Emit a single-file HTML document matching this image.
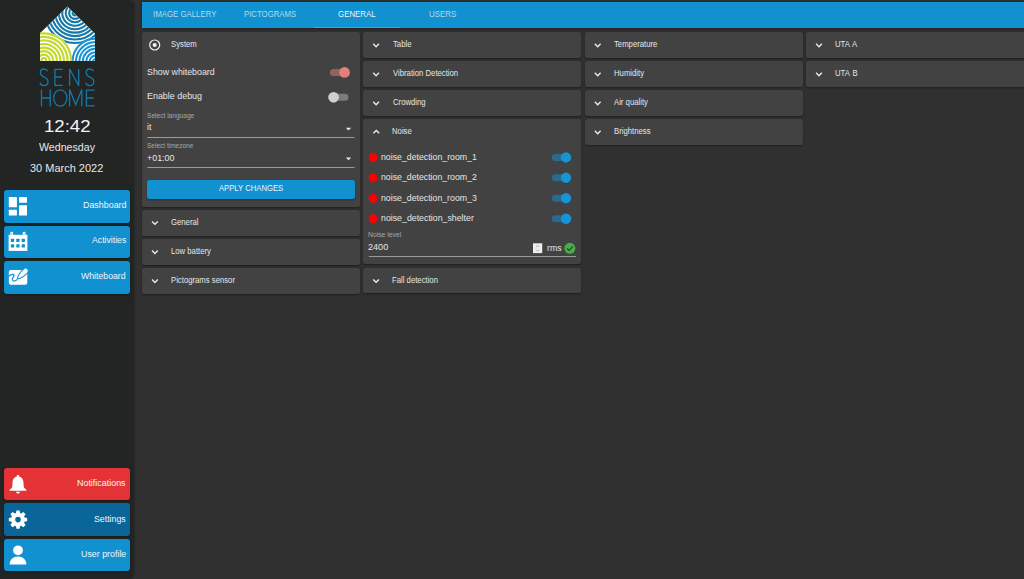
<!DOCTYPE html>
<html><head><meta charset="utf-8">
<style>
html,body{margin:0;padding:0}
body{width:1024px;height:579px;overflow:hidden;position:relative;background:#303030;font-family:"Liberation Sans",sans-serif}
.a{position:absolute}
.t{position:absolute;white-space:nowrap;line-height:1;transform-origin:0 0}
#side{left:0;top:0;width:133.8px;height:579px;background:#232524;border-radius:0 6px 6px 0;box-shadow:1px 0 1.5px rgba(0,0,0,0.18)}
.btn{position:absolute;left:4px;width:126.4px;height:32.5px;border-radius:3px;background:#1191d0;box-shadow:0 1px 2px rgba(0,0,0,0.35)}
#tabs{left:141.7px;top:2px;width:884px;height:26px;background:#1191d0;box-shadow:0 1px 3px rgba(0,0,0,0.35)}
.p{position:absolute;background:#424242;border-radius:2.5px;box-shadow:0 1px 2px rgba(0,0,0,0.35)}
</style></head>
<body>
<div id="side" class="a"></div>
<!-- sidebar buttons -->
<div class="btn" style="top:190px"></div>
<div class="btn" style="top:225.8px"></div>
<div class="btn" style="top:261.3px"></div>
<div class="btn" style="top:467.8px;background:#e43337"></div>
<div class="btn" style="top:503.2px;background:#0a6698"></div>
<div class="btn" style="top:538.7px"></div>

<svg class="a" style="left:0;top:0" width="134" height="579" viewBox="0 0 134 579">
  <defs>
    <clipPath id="house"><polygon points="40,33.2 67.4,6.4 95,33.5 95,61 40,61"/></clipPath>
  </defs>
  <g clip-path="url(#house)">
    <rect x="38" y="4" width="60" height="60" fill="#fff"/>
    <g fill="none" stroke="#1479a6" stroke-width="2.1">
      <circle cx="75" cy="13" r="2.4"/><circle cx="75" cy="13" r="5.85"/><circle cx="75" cy="13" r="9.3"/>
      <circle cx="75" cy="13" r="12.75"/><circle cx="75" cy="13" r="16.2"/><circle cx="75" cy="13" r="19.65"/>
      <circle cx="75" cy="13" r="23.1"/><circle cx="75" cy="13" r="26.55"/><circle cx="75" cy="13" r="30"/>
    </g>
    <circle cx="95.6" cy="61.6" r="24.1" fill="#fff"/>
    <g fill="none" stroke="#1793d3" stroke-width="2.05"><circle cx="95.6" cy="61.6" r="2.60"/><circle cx="95.6" cy="61.6" r="6.00"/><circle cx="95.6" cy="61.6" r="9.40"/><circle cx="95.6" cy="61.6" r="12.80"/><circle cx="95.6" cy="61.6" r="16.20"/><circle cx="95.6" cy="61.6" r="19.60"/><circle cx="95.6" cy="61.6" r="23.00"/></g>
    <circle cx="43.8" cy="60.6" r="28.4" fill="#fff"/>
    <g fill="none" stroke="#c3d82e" stroke-width="2.15"><circle cx="43.8" cy="60.6" r="2.40"/><circle cx="43.8" cy="60.6" r="5.95"/><circle cx="43.8" cy="60.6" r="9.50"/><circle cx="43.8" cy="60.6" r="13.05"/><circle cx="43.8" cy="60.6" r="16.60"/><circle cx="43.8" cy="60.6" r="20.15"/><circle cx="43.8" cy="60.6" r="23.70"/><circle cx="43.8" cy="60.6" r="27.25"/></g>
  </g>
  <g fill="none" stroke="#1479a6" stroke-width="1.3" stroke-linecap="butt">
    <path d="M47.8,71.2 C46.8,69.6 45.5,69 44,69 C41.8,69 40.4,70.5 40.4,72.8 C40.4,75.2 42.2,76.3 44.2,77.1 C46.4,78 48,79.2 48,81.8 C48,84.2 46.3,85.6 44,85.6 C42.1,85.6 40.6,84.5 39.9,82.8"/>
    <path d="M62.9,69.3 H54.9 V85.3 H62.9 M54.9,77 H62"/>
    <path d="M69.6,85.7 V69 L78.7,85.7 V69"/>
    <path transform="translate(45.8,0)" d="M47.8,71.2 C46.8,69.6 45.5,69 44,69 C41.8,69 40.4,70.5 40.4,72.8 C40.4,75.2 42.2,76.3 44.2,77.1 C46.4,78 48,79.2 48,81.8 C48,84.2 46.3,85.6 44,85.6 C42.1,85.6 40.6,84.5 39.9,82.8"/>
    <path d="M41.5,89.6 V106.5 M50.2,89.6 V106.5 M41.5,98 H50.2"/>
    <ellipse cx="60.3" cy="98" rx="6.6" ry="8.2"/>
    <path d="M69.6,106.5 V89.6 L75.7,104.5 L81.8,89.6 V106.5"/>
    <path d="M94.4,90.2 H86.4 V105.9 H94.4 M86.4,98 H93.6"/>
  </g>
  <!-- dashboard -->
  <g fill="#fff">
    <rect x="8.8" y="196.9" width="8.1" height="10.4" rx="0.6"/>
    <rect x="8.8" y="209.7" width="8.1" height="5.9" rx="0.6"/>
    <rect x="19" y="205.2" width="8" height="10.4" rx="0.6"/>
    <rect x="19" y="196.9" width="8" height="5.9" rx="0.6"/>
  </g>
  <!-- calendar -->
  <rect x="8.6" y="234.8" width="18.8" height="16.1" fill="#fff"/>
  <rect x="10.3" y="231.8" width="2.8" height="4" rx="1.2" fill="#fff"/>
  <rect x="22.7" y="231.8" width="2.8" height="4" rx="1.2" fill="#fff"/>
  <rect x="11.2" y="232.8" width="1" height="2" fill="#8fcbe9"/>
  <rect x="23.6" y="232.8" width="1" height="2" fill="#8fcbe9"/>
  <g fill="#1191d0">
    <rect x="10.85" y="238.65" width="3.3" height="3.3" rx="0.5"/><rect x="16.25" y="238.65" width="3.3" height="3.3" rx="0.5"/><rect x="21.65" y="238.65" width="3.3" height="3.3" rx="0.5"/>
    <rect x="10.85" y="244.15" width="3.3" height="3.3" rx="0.5"/><rect x="16.25" y="244.15" width="3.3" height="3.3" rx="0.5"/><rect x="21.65" y="244.15" width="3.3" height="3.3" rx="0.5"/>
  </g>
  <!-- whiteboard -->
  <rect x="8.85" y="270" width="18.45" height="14.8" rx="2" fill="#fff"/>
  <path d="M8.85,276.1 C10.5,274.8 12.3,274 13.6,274.6 C14.8,275.3 13.2,277 12.6,278.3 C12,279.8 12.8,281.2 14.4,281 C15.6,280.8 16.4,280.3 17,279.6" fill="none" stroke="#1191d0" stroke-width="1.25" stroke-linecap="round"/>
  <path d="M18,278.3 Q18.9,274.2 24.06,269.32 A2.2,2.2 0 0 1 27.14,272.48 Q22.12,277.5 18,278.3 Z" fill="none" stroke="#1191d0" stroke-width="2.1" stroke-linejoin="round"/>
  <path d="M18,278.3 Q18.9,274.2 24.06,269.32 A2.2,2.2 0 0 1 27.14,272.48 Q22.12,277.5 18,278.3 Z" fill="#fff"/>
  <!-- bell -->
  <g fill="#fff">
    <circle cx="18" cy="476.4" r="1.3"/>
    <path d="M18,476.6 C14.2,476.6 12.6,479.5 12.5,483 L12.3,486.3 C12.2,488 10.6,488.9 9.7,489.5 V490.8 H26.3 V489.5 C25.4,488.9 23.8,488 23.7,486.3 L23.5,483 C23.4,479.5 21.8,476.6 18,476.6 Z"/>
    <path d="M16.1,491.7 H19.9 C19.9,492.8 19.1,493.5 18,493.5 C16.9,493.5 16.1,492.8 16.1,491.7 Z"/>
  </g>
  <!-- gear -->
  <path fill="#fff" fill-rule="evenodd" d="M15.98,513.00 L16.39,510.44 L19.61,510.44 L20.02,513.00 L21.24,513.51 L23.33,511.98 L25.62,514.27 L24.09,516.36 L24.60,517.58 L27.16,517.99 L27.16,521.21 L24.60,521.62 L24.09,522.84 L25.62,524.93 L23.33,527.22 L21.24,525.69 L20.02,526.20 L19.61,528.76 L16.39,528.76 L15.98,526.20 L14.76,525.69 L12.67,527.22 L10.38,524.93 L11.91,522.84 L11.40,521.62 L8.84,521.21 L8.84,517.99 L11.40,517.58 L11.91,516.36 L10.38,514.27 L12.67,511.98 L14.76,513.51 Z M18,516.8 A2.8,2.8 0 1 0 18,522.4 A2.8,2.8 0 1 0 18,516.8 Z"/>
  <!-- person -->
  <g fill="#fff">
    <circle cx="18" cy="550.3" r="4.9"/>
    <path d="M9.7,564.4 C9.7,559.6 13.4,556.6 18,556.6 C22.6,556.6 26.3,559.6 26.3,564.4 Z"/>
  </g>
</svg>

<!-- tab bar -->
<div id="tabs" class="a"></div>
<div class="a" style="left:314px;top:26.6px;width:86px;height:1.4px;background:#d9706f"></div>

<!-- panels col1 -->
<div class="p" style="left:142px;top:32px;width:218px;height:174.5px"></div>
<div class="p" style="left:142px;top:210px;width:218px;height:25.6px"></div>
<div class="p" style="left:142px;top:239px;width:218px;height:25.7px"></div>
<div class="p" style="left:142px;top:268px;width:218px;height:25.7px"></div>
<!-- col2 -->
<div class="p" style="left:363.4px;top:32px;width:218px;height:26px"></div>
<div class="p" style="left:363.4px;top:61px;width:218px;height:26px"></div>
<div class="p" style="left:363.4px;top:90px;width:218px;height:26px"></div>
<div class="p" style="left:363.4px;top:119px;width:218px;height:145.2px"></div>
<div class="p" style="left:363.4px;top:268px;width:218px;height:25.2px"></div>
<!-- col3 -->
<div class="p" style="left:585px;top:32px;width:217.8px;height:26px"></div>
<div class="p" style="left:585px;top:61px;width:217.8px;height:26px"></div>
<div class="p" style="left:585px;top:90px;width:217.8px;height:26px"></div>
<div class="p" style="left:585px;top:119px;width:217.8px;height:26px"></div>
<!-- col4 -->
<div class="p" style="left:806.4px;top:32px;width:222px;height:26px"></div>
<div class="p" style="left:806.4px;top:61px;width:222px;height:26px"></div>

<svg class="a" style="left:0;top:0" width="1024" height="579" viewBox="0 0 1024 579">
  <!-- chevrons -->
  <g fill="none" stroke="#ececec" stroke-width="1.35" stroke-linejoin="miter">
    <path d="M152.0,221.4 L154.9,224.3 L157.8,221.4"/>
    <path d="M152.0,250.6 L154.9,253.5 L157.8,250.6"/>
    <path d="M152.0,279.6 L154.9,282.5 L157.8,279.6"/>
    <path d="M373.2,43.8 L376.1,46.7 L379.0,43.8"/>
    <path d="M373.2,72.8 L376.1,75.7 L379.0,72.8"/>
    <path d="M373.2,101.8 L376.1,104.7 L379.0,101.8"/>
    <path d="M373.4,133.3 L376.3,130.5 L379.2,133.3"/>
    <path d="M373.2,279.4 L376.1,282.3 L379.0,279.4"/>
    <path d="M594.8,43.8 L597.7,46.7 L600.6,43.8"/>
    <path d="M594.8,72.8 L597.7,75.7 L600.6,72.8"/>
    <path d="M594.8,101.8 L597.7,104.7 L600.6,101.8"/>
    <path d="M594.8,130.8 L597.7,133.7 L600.6,130.8"/>
    <path d="M816.1,43.8 L819.0,46.7 L821.9,43.8"/>
    <path d="M816.1,72.8 L819.0,75.7 L821.9,72.8"/>
  </g>
  <!-- radio -->
  <circle cx="154.7" cy="45" r="5" fill="none" stroke="#f0f0f0" stroke-width="1.2"/>
  <circle cx="154.7" cy="45" r="2.1" fill="#f0f0f0"/>
  <!-- toggles system -->
  <rect x="329.9" y="68.9" width="18.5" height="7" rx="3.5" fill="#94625f"/>
  <circle cx="344.5" cy="72.8" r="5.4" fill="rgba(0,0,0,0.25)"/>
  <circle cx="344.5" cy="72.4" r="5.4" fill="#e57f79"/>
  <rect x="333" y="93.8" width="15.5" height="7" rx="3.5" fill="#7b7b7b"/>
  <circle cx="333.6" cy="97.7" r="5.4" fill="rgba(0,0,0,0.25)"/>
  <circle cx="333.6" cy="97.3" r="5.4" fill="#d0d0d0"/>
  <!-- selects -->
  <rect x="147.3" y="137" width="207.2" height="1" fill="#9a9a9a"/>
  <rect x="147.3" y="167" width="207.2" height="1" fill="#9a9a9a"/>
  <path d="M345.9,127.7 H351.1 L348.5,130.4 Z" fill="#eeeeee"/>
  <path d="M345.9,157.5 H351.1 L348.5,160.2 Z" fill="#eeeeee"/>
  <!-- noise dots and toggles -->
  <g fill="#ff0000"><circle cx="373" cy="157.40" r="4.4"/><circle cx="373" cy="177.85" r="4.4"/><circle cx="373" cy="198.30" r="4.4"/><circle cx="373" cy="218.75" r="4.4"/></g>
  <g><rect x="551.7" y="153.90" width="18" height="7" rx="3.5" fill="#2a6a8c"/><rect x="551.7" y="174.35" width="18" height="7" rx="3.5" fill="#2a6a8c"/><rect x="551.7" y="194.80" width="18" height="7" rx="3.5" fill="#2a6a8c"/><rect x="551.7" y="215.25" width="18" height="7" rx="3.5" fill="#2a6a8c"/>
    <g fill="rgba(0,0,0,0.25)"><circle cx="566" cy="157.80" r="5.25"/><circle cx="566" cy="178.25" r="5.25"/><circle cx="566" cy="198.70" r="5.25"/><circle cx="566" cy="219.15" r="5.25"/></g>
    <g fill="#1694d4"><circle cx="566" cy="157.40" r="5.25"/><circle cx="566" cy="177.85" r="5.25"/><circle cx="566" cy="198.30" r="5.25"/><circle cx="566" cy="218.75" r="5.25"/></g>
  </g>
  <!-- noise level -->
  <rect x="368.8" y="256" width="207.2" height="1" fill="#9a9a9a"/>
  <rect x="533" y="243.3" width="9.2" height="9.8" fill="#efefef"/>
  <path d="M535.9,247 L537.6,245.4 L539.3,247 M535.9,249.5 L537.6,251.1 L539.3,249.5" fill="none" stroke="#8c9aa8" stroke-width="0.7"/>
  <circle cx="569.9" cy="248.3" r="5.45" fill="#45b04a"/>
  <path d="M567,248.4 L569,250.4 L572.9,246.4" fill="none" stroke="#3a3a3a" stroke-width="1.3"/>
</svg>

<!-- apply button -->
<div class="a" style="left:147.2px;top:179.7px;width:207.5px;height:19.6px;background:#1191d0;border-radius:2.5px;box-shadow:0 1px 2px rgba(0,0,0,0.35)"></div>

<span class='t' style='left:44.18px;top:117.76px;font-size:17.3px;color:#f4f4f4;transform:scaleX(1.0764);'>12:42</span>
<span class='t' style='left:39.05px;top:141.61px;font-size:10.5px;color:#e8e8e8;transform:scaleX(1.0127);'>Wednesday</span>
<span class='t' style='left:30.48px;top:162.76px;font-size:10.8px;color:#e8e8e8;transform:scaleX(1.0172);'>30 March 2022</span>
<span class='t' style='left:82.57px;top:200.67px;font-size:8.9px;color:#f0f6fa;transform:scaleX(1.0019);'>Dashboard</span>
<span class='t' style='left:91.58px;top:236.47px;font-size:8.9px;color:#f0f6fa;transform:scaleX(0.9776);'>Activities</span>
<span class='t' style='left:81.46px;top:271.77px;font-size:8.9px;color:#f0f6fa;transform:scaleX(0.9826);'>Whiteboard</span>
<span class='t' style='left:77.27px;top:478.57px;font-size:8.9px;color:#f0f6fa;transform:scaleX(1.0044);'>Notifications</span>
<span class='t' style='left:94.10px;top:514.67px;font-size:8.9px;color:#f0f6fa;transform:scaleX(0.9888);'>Settings</span>
<span class='t' style='left:80.62px;top:550.17px;font-size:8.9px;color:#f0f6fa;transform:scaleX(0.9976);'>User profile</span>
<span class='t' style='left:152.88px;top:10.09px;font-size:8.4px;color:rgba(255,255,255,0.68);transform:scaleX(0.9349);'>IMAGE GALLERY</span>
<span class='t' style='left:244.36px;top:10.09px;font-size:8.4px;color:rgba(255,255,255,0.68);transform:scaleX(0.9295);'>PICTOGRAMS</span>
<span class='t' style='left:337.60px;top:10.09px;font-size:8.4px;color:rgba(255,255,255,0.95);transform:scaleX(0.9408);'>GENERAL</span>
<span class='t' style='left:429.19px;top:10.09px;font-size:8.4px;color:rgba(255,255,255,0.68);transform:scaleX(0.9488);'>USERS</span>
<span class='t' style='left:171.05px;top:39.79px;font-size:8.4px;color:#e6e6e6;transform:scaleX(0.9226);'>System</span>
<span class='t' style='left:171.01px;top:217.79px;font-size:8.4px;color:#e6e6e6;transform:scaleX(0.9226);'>General</span>
<span class='t' style='left:170.76px;top:246.79px;font-size:8.4px;color:#e6e6e6;transform:scaleX(0.9226);'>Low battery</span>
<span class='t' style='left:170.76px;top:275.79px;font-size:8.4px;color:#e6e6e6;transform:scaleX(0.9226);'>Pictograms sensor</span>
<span class='t' style='left:392.73px;top:39.79px;font-size:8.4px;color:#e6e6e6;transform:scaleX(0.9226);'>Table</span>
<span class='t' style='left:392.87px;top:68.79px;font-size:8.4px;color:#e6e6e6;transform:scaleX(0.9226);'>Vibration Detection</span>
<span class='t' style='left:392.51px;top:97.79px;font-size:8.4px;color:#e6e6e6;transform:scaleX(0.9226);'>Crowding</span>
<span class='t' style='left:392.26px;top:126.79px;font-size:8.4px;color:#e6e6e6;transform:scaleX(0.9226);'>Noise</span>
<span class='t' style='left:392.26px;top:275.79px;font-size:8.4px;color:#e6e6e6;transform:scaleX(0.9226);'>Fall detection</span>
<span class='t' style='left:614.23px;top:39.79px;font-size:8.4px;color:#e6e6e6;transform:scaleX(0.9226);'>Temperature</span>
<span class='t' style='left:613.76px;top:68.79px;font-size:8.4px;color:#e6e6e6;transform:scaleX(0.9226);'>Humidity</span>
<span class='t' style='left:614.38px;top:97.79px;font-size:8.4px;color:#e6e6e6;transform:scaleX(0.9226);'>Air quality</span>
<span class='t' style='left:613.76px;top:126.79px;font-size:8.4px;color:#e6e6e6;transform:scaleX(0.9226);'>Brightness</span>
<span class='t' style='left:835.30px;top:39.79px;font-size:8.4px;color:#e6e6e6;transform:scaleX(0.9226);word-spacing:1px'>UTA A</span>
<span class='t' style='left:835.30px;top:68.79px;font-size:8.4px;color:#e6e6e6;transform:scaleX(0.9226);word-spacing:1px'>UTA B</span>
<span class='t' style='left:146.90px;top:66.67px;font-size:9.6px;color:#e6e6e6;transform:scaleX(0.9193);'>Show whiteboard</span>
<span class='t' style='left:146.87px;top:91.37px;font-size:9.6px;color:#e6e6e6;transform:scaleX(0.9289);'>Enable debug</span>
<span class='t' style='left:147.00px;top:112.07px;font-size:7.0px;color:#a8a8a8;transform:scaleX(0.9417);'>Select language</span>
<span class='t' style='left:147.22px;top:122.47px;font-size:9.6px;color:#e6e6e6;transform:scaleX(0.9059);'>it</span>
<span class='t' style='left:147.00px;top:141.87px;font-size:7.0px;color:#a8a8a8;transform:scaleX(0.9292);'>Select timezone</span>
<span class='t' style='left:146.87px;top:152.67px;font-size:9.6px;color:#e6e6e6;transform:scaleX(0.9277);'>+01:00</span>
<span class='t' style='left:218.98px;top:184.19px;font-size:8.4px;color:#f0f6fa;transform:scaleX(0.9169);'>APPLY CHANGES</span>
<span class='t' style='left:381.22px;top:151.99px;font-size:9.4px;color:#e6e6e6;transform:scaleX(0.9330);'>noise_detection_room_1</span>
<span class='t' style='left:381.22px;top:172.44px;font-size:9.4px;color:#e6e6e6;transform:scaleX(0.9332);'>noise_detection_room_2</span>
<span class='t' style='left:381.22px;top:192.89px;font-size:9.4px;color:#e6e6e6;transform:scaleX(0.9326);'>noise_detection_room_3</span>
<span class='t' style='left:381.21px;top:213.34px;font-size:9.4px;color:#e6e6e6;transform:scaleX(0.9374);'>noise_detection_shelter</span>
<span class='t' style='left:368.24px;top:231.17px;font-size:7.0px;color:#a8a8a8;transform:scaleX(0.9697);'>Noise level</span>
<span class='t' style='left:368.34px;top:241.94px;font-size:9.4px;color:#e6e6e6;transform:scaleX(0.9691);'>2400</span>
<span class='t' style='left:547.21px;top:242.94px;font-size:9.4px;color:#e6e6e6;transform:scaleX(0.9413);'>rms</span>
</body></html>
